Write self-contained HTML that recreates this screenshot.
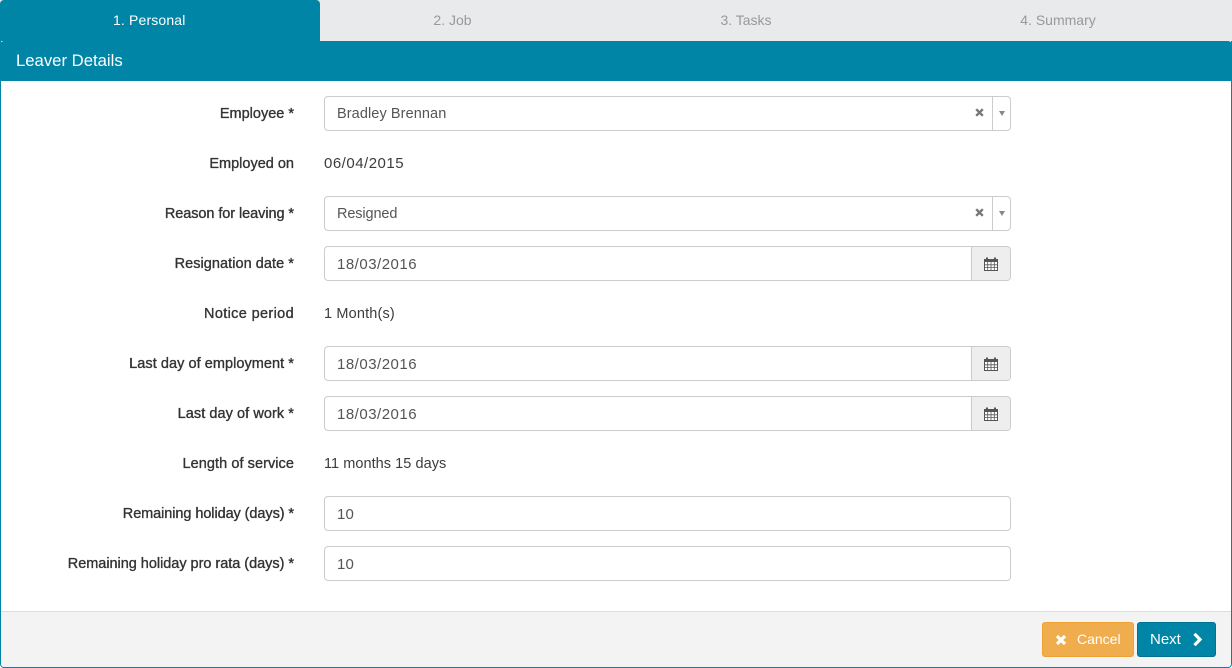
<!DOCTYPE html>
<html lang="en">
<head>
<meta charset="utf-8">
<title>Leaver Details</title>
<style>
html,body{margin:0;padding:0;width:1232px;height:668px;overflow:hidden;background:#fff;font-family:"Liberation Sans",sans-serif;font-size:14px;color:#333}
.tabs{position:absolute;left:0;top:0;width:1232px;height:41px;background:#e9eaec}
.tab{position:absolute;top:0;height:41px;line-height:41px;text-align:center;color:#999;font-size:14px}
.tab.on{left:0;width:320px;background:#0085a6;color:#fff;border-radius:4px 4px 0 0}
.tab.on span{position:absolute;left:113px;top:0;letter-spacing:.15px;white-space:nowrap}
.panel{position:absolute;left:0;top:41px;width:1230px;border:1px solid #0085a6;border-top:0;border-radius:0 0 4px 4px;background:#fff;height:626px}
.head{position:absolute;left:0;top:41px;width:1232px;height:40px;background:#0085a6;color:#fff;font-size:16.7px;line-height:39px;border-radius:4px 4px 0 0}
.head span{margin-left:16px}
.foot{position:absolute;left:1px;top:611px;width:1230px;height:55px;background:#f3f3f3;border-top:1px solid #ddd;border-radius:0 0 3px 3px}
.lab{position:absolute;right:938px;white-space:nowrap;font-size:14.5px;line-height:20px;color:#333;-webkit-text-stroke:.35px #333;margin-top:1px}
.val{position:absolute;left:324px;font-size:14.5px;line-height:20px;color:#3c3c3c;white-space:nowrap;margin-top:1px}
.inp{position:absolute;left:324px;width:685px;height:33px;border:1px solid #ccc;border-radius:4px;background:#fff;line-height:33px;color:#555;box-sizing:content-box;font-size:14.5px}
.inp b{font-weight:400;position:absolute;left:12px;top:1px;white-space:nowrap}
.d{letter-spacing:.5px;font-size:15px}
.sep{position:absolute;right:17px;top:0;width:1px;height:33px;background:#ccc}
.x{position:absolute;left:650px;top:11px}
.arr{position:absolute;right:5px;top:14px;width:0;height:0;border-left:3.5px solid transparent;border-right:3.5px solid transparent;border-top:5px solid #888}
.addon{position:absolute;right:0;top:0;width:38px;height:33px;background:#eee;border-left:1px solid #ccc;border-radius:0 3px 3px 0}
.addon svg{position:absolute;left:11px;top:10px}
.btn{position:absolute;top:622px;height:33px;line-height:33px;border-radius:3px;color:#fff;font-size:14px;box-sizing:content-box}
.cancel{left:1042px;width:90px;background:#f0ad4e;border:1px solid #eea236}
.next{left:1137px;width:77px;background:#0085a6;border:1px solid #007391}
.btn span{position:absolute;top:0;white-space:nowrap}
.btn svg{position:absolute}
</style>
</head>
<body>
<div class="tabs">
  <div class="tab on"><span>1. Personal</span></div>
  <div class="tab" style="left:320px;width:265px">2. Job</div>
  <div class="tab" style="left:585px;width:322px">3. Tasks</div>
  <div class="tab" style="left:907px;width:302px">4. Summary</div>
</div>
<div class="panel"></div>
<div class="head"><span>Leaver Details</span></div>

<div class="lab" style="top:103px">Employee *</div>
<div class="inp" style="top:96px"><b style="letter-spacing:.09px">Bradley Brennan</b>
  <svg class="x" width="10" height="10" viewBox="0 0 10 10"><path d="M1.2 1.2l6.6 6.6M7.8 1.2l-6.6 6.6" stroke="#777" stroke-width="2.4"/></svg>
  <i class="sep"></i><i class="arr"></i></div>

<div class="lab" style="top:153px">Employed on</div>
<div class="val d" style="top:153px">06/04/2015</div>

<div class="lab" style="top:203px;letter-spacing:-.07px">Reason for leaving *</div>
<div class="inp" style="top:196px"><b style="letter-spacing:-.12px">Resigned</b>
  <svg class="x" width="10" height="10" viewBox="0 0 10 10"><path d="M1.2 1.2l6.6 6.6M7.8 1.2l-6.6 6.6" stroke="#777" stroke-width="2.4"/></svg>
  <i class="sep"></i><i class="arr"></i></div>

<div class="lab" style="top:253px;letter-spacing:.05px">Resignation date *</div>
<div class="inp" style="top:246px"><b class="d">18/03/2016</b>
  <div class="addon"><svg width="16" height="14" viewBox="0 0 16 14"><path d="M1.5 2.5h13v11h-13z" fill="#fff" stroke="#555"/><path d="M1.5 2.5h13v2.5h-13z" fill="#555"/><path d="M4 .5v3M12 .5v3" stroke="#555" stroke-width="2"/><path d="M1.5 7.8h13M1.5 10.6h13M4.7 5v8M8 5v8M11.3 5v8" stroke="#555" stroke-width=".8"/></svg></div></div>

<div class="lab" style="top:303px;letter-spacing:.35px">Notice period</div>
<div class="val" style="top:303px;letter-spacing:.16px">1 Month(s)</div>

<div class="lab" style="top:353px;letter-spacing:.05px">Last day of employment *</div>
<div class="inp" style="top:346px"><b class="d">18/03/2016</b>
  <div class="addon"><svg width="16" height="14" viewBox="0 0 16 14"><path d="M1.5 2.5h13v11h-13z" fill="#fff" stroke="#555"/><path d="M1.5 2.5h13v2.5h-13z" fill="#555"/><path d="M4 .5v3M12 .5v3" stroke="#555" stroke-width="2"/><path d="M1.5 7.8h13M1.5 10.6h13M4.7 5v8M8 5v8M11.3 5v8" stroke="#555" stroke-width=".8"/></svg></div></div>

<div class="lab" style="top:403px;letter-spacing:.06px">Last day of work *</div>
<div class="inp" style="top:396px"><b class="d">18/03/2016</b>
  <div class="addon"><svg width="16" height="14" viewBox="0 0 16 14"><path d="M1.5 2.5h13v11h-13z" fill="#fff" stroke="#555"/><path d="M1.5 2.5h13v2.5h-13z" fill="#555"/><path d="M4 .5v3M12 .5v3" stroke="#555" stroke-width="2"/><path d="M1.5 7.8h13M1.5 10.6h13M4.7 5v8M8 5v8M11.3 5v8" stroke="#555" stroke-width=".8"/></svg></div></div>

<div class="lab" style="top:453px;letter-spacing:.06px">Length of service</div>
<div class="val" style="top:453px;letter-spacing:.05px">11 months 15 days</div>

<div class="lab" style="top:503px;letter-spacing:-.08px">Remaining holiday (days) *</div>
<div class="inp" style="top:496px"><b class="d" style="letter-spacing:.1px">10</b></div>

<div class="lab" style="top:553px;letter-spacing:-.03px">Remaining holiday pro rata (days) *</div>
<div class="inp" style="top:546px"><b class="d" style="letter-spacing:.1px">10</b></div>

<div class="foot"></div>
<div class="btn cancel">
  <svg style="left:12px;top:11px" width="12" height="12" viewBox="0 0 12 12"><path d="M2 2l8 8M10 2l-8 8" stroke="#fff" stroke-width="3.2"/></svg>
  <span style="left:34px">Cancel</span></div>
<div class="btn next"><span style="left:12px;font-size:15px">Next</span>
  <svg style="left:53px;top:9px" width="14" height="15" viewBox="0 0 14 15"><path d="M3.5 1.8l5.5 5.7-5.5 5.7" fill="none" stroke="#fff" stroke-width="3.2"/></svg></div>
</body>
</html>
